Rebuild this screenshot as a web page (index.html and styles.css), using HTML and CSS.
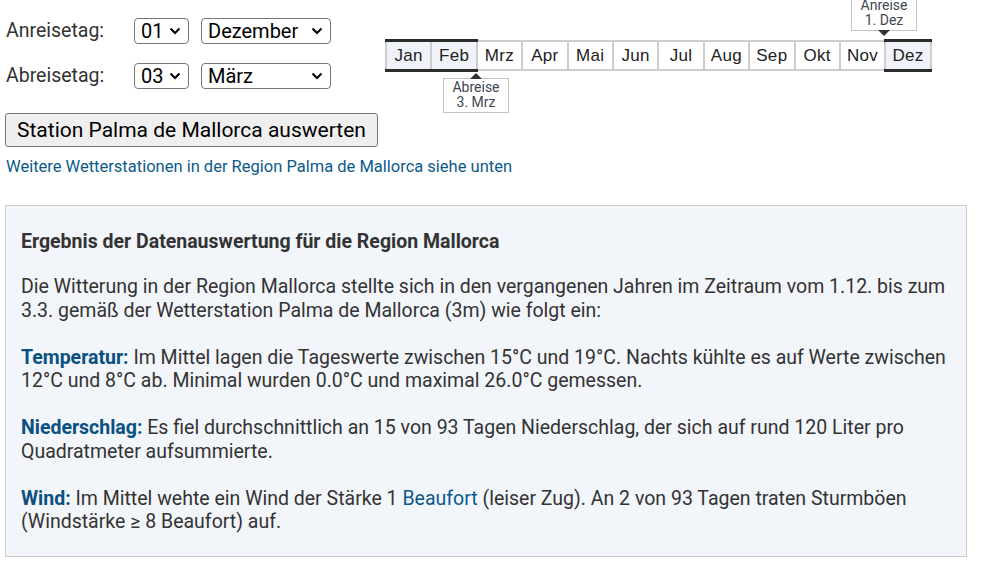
FILE: index.html
```html
<!DOCTYPE html>
<html lang="de">
<head>
<meta charset="utf-8">
<title>Wetter Palma de Mallorca</title>
<link rel="stylesheet" href="styles.css">
</head>
<body>
<div class="page">
  <div class="top">
    <div class="form">
      <div class="row">
        <label class="lbl">Anreisetag:</label>
        <select class="sel day"><option>01</option></select>
        <select class="sel month"><option>Dezember</option></select>
      </div>
      <div class="row">
        <label class="lbl">Abreisetag:</label>
        <select class="sel day"><option>03</option></select>
        <select class="sel month"><option>März</option></select>
      </div>
    </div>
    <div class="timeline">
      <div class="months">
        <div class="m on">Jan</div>
        <div class="m on">Feb</div>
        <div class="m">Mrz</div>
        <div class="m">Apr</div>
        <div class="m">Mai</div>
        <div class="m">Jun</div>
        <div class="m">Jul</div>
        <div class="m">Aug</div>
        <div class="m">Sep</div>
        <div class="m">Okt</div>
        <div class="m">Nov</div>
        <div class="m on">Dez</div>
      </div>
      <div class="tip tip-start">Anreise<br>1. Dez</div>
      <div class="tip tip-end">Abreise<br>3. Mrz</div>
    </div>
  </div>
  <button class="btn">Station Palma de Mallorca auswerten</button>
  <p class="more">Weitere Wetterstationen in der Region Palma de Mallorca siehe unten</p>
  <div class="result">
    <h2 class="rtitle">Ergebnis der Datenauswertung für die Region Mallorca</h2>
    <p>Die Witterung in der Region Mallorca stellte sich in den vergangenen Jahren im Zeitraum vom 1.12. bis zum 3.3. gemäß der Wetterstation Palma de Mallorca (3m) wie folgt ein:</p>
    <p><b class="key">Temperatur:</b> Im Mittel lagen die Tageswerte zwischen 15°C und 19°C. Nachts kühlte es auf Werte zwischen 12°C und 8°C ab. Minimal wurden 0.0°C und maximal 26.0°C gemessen.</p>
    <p><b class="key">Niederschlag:</b> Es fiel durchschnittlich an 15 von 93 Tagen Niederschlag, der sich auf rund 120 Liter pro Quadratmeter aufsummierte.</p>
    <p><b class="key">Wind:</b> Im Mittel wehte ein Wind der Stärke 1 <a class="lnk" href="#">Beaufort</a> (leiser Zug). An 2 von 93 Tagen traten Sturmböen (Windstärke ≥ 8 Beaufort) auf.</p>
  </div>
</div>
</body>
</html>
```

FILE: styles.css
```css
html, body {
  margin: 0;
  padding: 0;
  background: #fff;
}
.page {
  padding: 0 15px 0 5px;
  font-family: Roboto, "Liberation Sans", sans-serif;
  color: #333;
}
.top {
  display: flex;
  align-items: flex-start;
  padding-top: 18px;
}
.form {
  display: flex;
  flex-direction: column;
  gap: 20px;
}
.row {
  display: flex;
  align-items: center;
  height: 25px;
}
.lbl {
  width: 128px;
  padding-left: 1px;
  font-size: 19.5px;
  color: #333;
}
.sel {
  -webkit-appearance: none;
  appearance: none;
  height: 26px;
  font-family: Roboto, "Liberation Sans", sans-serif;
  font-size: 20px;
  color: #000;
  background-color: #fff;
  background-image: url("data:image/svg+xml,%3Csvg xmlns='http://www.w3.org/2000/svg' width='12' height='8' viewBox='0 0 12 8'%3E%3Cpath d='M1.5 1.5 L6 6 L10.5 1.5' fill='none' stroke='%23000' stroke-width='2'/%3E%3C/svg%3E");
  background-repeat: no-repeat;
  background-position: right 7px center;
  border: 1px solid #767676;
  border-radius: 4px;
  padding: 0 0 0 6px;
  margin: 0;
}
.day { width: 55px; }
.month { width: 130px; margin-left: 12px; }

.timeline {
  position: relative;
  margin-left: 54px;
  margin-top: 22px;
}
.months {
  display: grid;
  grid-template-columns: repeat(12, 43.4px);
  gap: 2px;
  padding: 2px;
  background: #cdcdcd;
}
.m {
  position: relative;
  height: 27px;
  background: #fff;
  display: flex;
  align-items: center;
  justify-content: center;
  font-family: "Liberation Sans", Arial, sans-serif;
  font-size: 17px;
  letter-spacing: 0.3px;
  color: #222;
}
.m.on {
  background: #eff3f9;
}
.m.on::before,
.m.on::after {
  content: "";
  position: absolute;
  left: -2px;
  right: -2px;
  height: 3px;
  background: #2b2b2b;
}
.m.on::before { top: -3px; }
.m.on::after { bottom: -3px; }

.tip {
  position: absolute;
  width: 64px;
  padding: 1px 0 2px;
  background: #fff;
  border: 1px solid #c4c4c4;
  font-size: 14px;
  line-height: 15px;
  text-align: center;
  color: #3f4852;
}
.tip::after {
  content: "";
  position: absolute;
  left: 50%;
  margin-left: -6px;
  border-left: 6px solid transparent;
  border-right: 6px solid transparent;
}
.tip-start {
  left: 466px;
  top: -44px;
}
.tip-start::after {
  top: 100%;
  border-top: 6px solid #333;
}
.tip-end {
  left: 58px;
  top: 38px;
}
.tip-end::after {
  bottom: 100%;
  border-bottom: 6px solid #333;
}

.btn {
  display: block;
  margin: 25px 0 0 0;
  height: 34px;
  padding: 0 11px;
  font-family: Roboto, "Liberation Sans", sans-serif;
  font-size: 21px;
  color: #000;
  background: #efefef;
  border: 1px solid #767676;
  border-radius: 3px;
}
.more {
  margin: 10px 0 0 1px;
  font-size: 16.5px;
  line-height: 20px;
  color: #0b5a8b;
}
.result {
  margin-top: 28px;
  width: 962px;
  box-sizing: border-box;
  padding: 24px 15px 22px 15px;
  background: #f2f5fa;
  border: 1px solid #cccccc;
  font-size: 19.5px;
  line-height: 23.5px;
  color: #333;
}
.rtitle {
  margin: 0 0 21.5px 0;
  font-size: 19.5px;
  line-height: 23.5px;
  font-weight: 700;
  color: #333;
}
.result p {
  margin: 0 0 23.5px 0;
}
.result p:last-child {
  margin-bottom: 0;
}
.key {
  color: #0a5080;
}
.lnk {
  color: #0b5a8b;
  text-decoration: none;
}
```
